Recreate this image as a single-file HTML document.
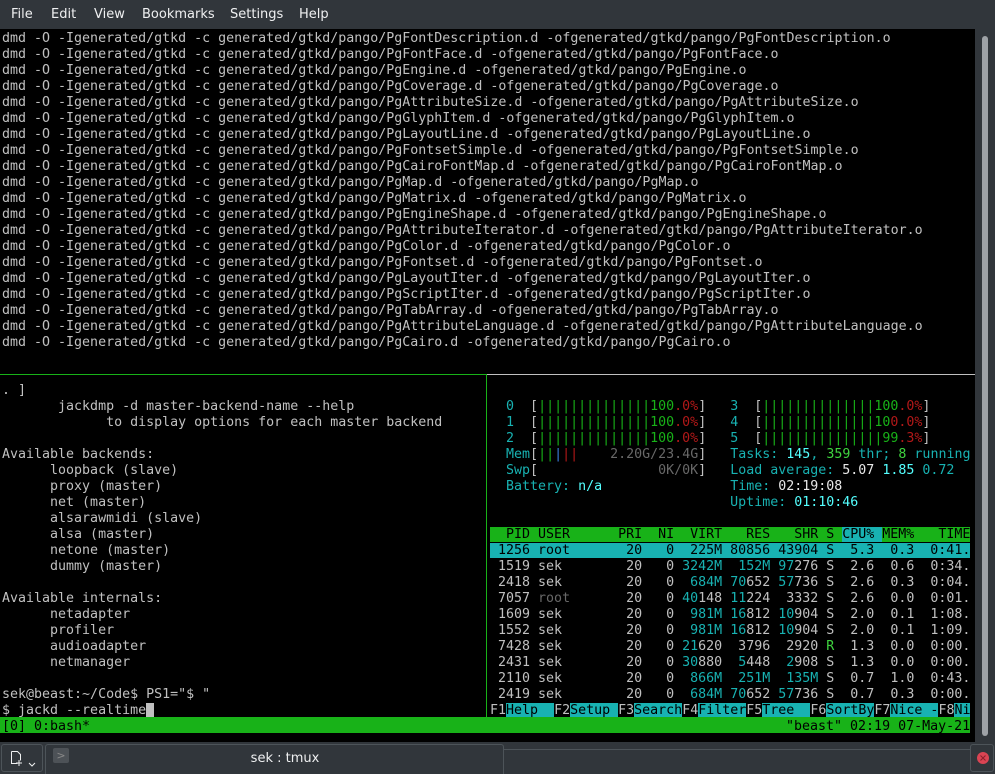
<!DOCTYPE html>
<html><head><meta charset="utf-8">
<style>
*{margin:0;padding:0;box-sizing:border-box}
body{width:995px;height:774px;background:#31363b;position:relative;overflow:hidden;font-family:"DejaVu Sans Mono","Liberation Mono",monospace}
.menu{position:absolute;top:0;left:0;width:995px;height:29px;background:#31363b;color:#eff0f1;font:13px "DejaVu Sans","Liberation Sans",sans-serif}
.menu span{position:absolute;top:7px}
.term{position:absolute;left:0;top:29px;width:975px;height:713px;background:#000}
pre{position:absolute;font-family:"DejaVu Sans Mono","Liberation Mono",monospace;font-size:13.3px;line-height:16px;color:#c0c0c0;white-space:pre}
.c{color:#18b2b2}.C{color:#54ffff}.g{color:#18b218}.G{color:#3fd43f}.r{color:#b21818}.d{color:#686868}.w{color:#e8e8e8}.b{color:#3b7ddd}
.hl{background:#18b2b2;color:#000}.hg{background:#18b218;color:#000}
.cur{background:#c0c0c0;color:#000}
.sb{position:absolute;left:975px;top:29px;width:20px;height:713px;background:#31363b}
.thumb{position:absolute;left:982px;top:36px;width:6px;height:700px;background:#9ea2a6;border-radius:3px}
.tabs{position:absolute;left:0;top:742px;width:995px;height:32px;background:#31363b}
</style></head><body>
<div class="menu"><span style="left:11px">File</span><span style="left:51px">Edit</span><span style="left:94px">View</span><span style="left:142px">Bookmarks</span><span style="left:230px">Settings</span><span style="left:299px">Help</span></div>
<div class="term"></div>
<pre style="left:2px;top:31px">dmd -O -Igenerated/gtkd -c generated/gtkd/pango/PgFontDescription.d -ofgenerated/gtkd/pango/PgFontDescription.o
dmd -O -Igenerated/gtkd -c generated/gtkd/pango/PgFontFace.d -ofgenerated/gtkd/pango/PgFontFace.o
dmd -O -Igenerated/gtkd -c generated/gtkd/pango/PgEngine.d -ofgenerated/gtkd/pango/PgEngine.o
dmd -O -Igenerated/gtkd -c generated/gtkd/pango/PgCoverage.d -ofgenerated/gtkd/pango/PgCoverage.o
dmd -O -Igenerated/gtkd -c generated/gtkd/pango/PgAttributeSize.d -ofgenerated/gtkd/pango/PgAttributeSize.o
dmd -O -Igenerated/gtkd -c generated/gtkd/pango/PgGlyphItem.d -ofgenerated/gtkd/pango/PgGlyphItem.o
dmd -O -Igenerated/gtkd -c generated/gtkd/pango/PgLayoutLine.d -ofgenerated/gtkd/pango/PgLayoutLine.o
dmd -O -Igenerated/gtkd -c generated/gtkd/pango/PgFontsetSimple.d -ofgenerated/gtkd/pango/PgFontsetSimple.o
dmd -O -Igenerated/gtkd -c generated/gtkd/pango/PgCairoFontMap.d -ofgenerated/gtkd/pango/PgCairoFontMap.o
dmd -O -Igenerated/gtkd -c generated/gtkd/pango/PgMap.d -ofgenerated/gtkd/pango/PgMap.o
dmd -O -Igenerated/gtkd -c generated/gtkd/pango/PgMatrix.d -ofgenerated/gtkd/pango/PgMatrix.o
dmd -O -Igenerated/gtkd -c generated/gtkd/pango/PgEngineShape.d -ofgenerated/gtkd/pango/PgEngineShape.o
dmd -O -Igenerated/gtkd -c generated/gtkd/pango/PgAttributeIterator.d -ofgenerated/gtkd/pango/PgAttributeIterator.o
dmd -O -Igenerated/gtkd -c generated/gtkd/pango/PgColor.d -ofgenerated/gtkd/pango/PgColor.o
dmd -O -Igenerated/gtkd -c generated/gtkd/pango/PgFontset.d -ofgenerated/gtkd/pango/PgFontset.o
dmd -O -Igenerated/gtkd -c generated/gtkd/pango/PgLayoutIter.d -ofgenerated/gtkd/pango/PgLayoutIter.o
dmd -O -Igenerated/gtkd -c generated/gtkd/pango/PgScriptIter.d -ofgenerated/gtkd/pango/PgScriptIter.o
dmd -O -Igenerated/gtkd -c generated/gtkd/pango/PgTabArray.d -ofgenerated/gtkd/pango/PgTabArray.o
dmd -O -Igenerated/gtkd -c generated/gtkd/pango/PgAttributeLanguage.d -ofgenerated/gtkd/pango/PgAttributeLanguage.o
dmd -O -Igenerated/gtkd -c generated/gtkd/pango/PgCairo.d -ofgenerated/gtkd/pango/PgCairo.o</pre>
<div style="position:absolute;left:0;top:374px;width:487px;height:1px;background:#18b218"></div>
<div style="position:absolute;left:487px;top:374px;width:488px;height:1px;background:#c0c0c0"></div>
<div style="position:absolute;left:486px;top:374px;width:1px;height:343px;background:#18b218"></div>
<pre style="left:2px;top:383px">. ]
       jackdmp -d master-backend-name --help
             to display options for each master backend

Available backends:
      loopback (slave)
      proxy (master)
      net (master)
      alsarawmidi (slave)
      alsa (master)
      netone (master)
      dummy (master)

Available internals:
      netadapter
      profiler
      audioadapter
      netmanager

sek@beast:~/Code$ PS1="$ "
$ jackd --realtime<span class="cur"> </span></pre>
<pre style="left:490px;top:383px">

  <span class="c">0</span>  [<span class="g">||||||||||||||100</span><span class="r">.0%</span>]   <span class="c">3</span>  [<span class="g">||||||||||||||100</span><span class="r">.0%</span>]
  <span class="c">1</span>  [<span class="g">||||||||||||||100</span><span class="r">.0%</span>]   <span class="c">4</span>  [<span class="g">||||||||||||||10</span><span class="r">0.0%</span>]
  <span class="c">2</span>  [<span class="g">||||||||||||||100</span><span class="r">.0%</span>]   <span class="c">5</span>  [<span class="g">|||||||||||||||99</span><span class="r">.3%</span>]
  <span class="c">Mem</span>[<span class="g">||</span><span class="b">|</span><span class="r">||</span>    <span class="d">2.20G/23.4G</span>]   <span class="c">Tasks: </span><span class="C">145</span><span class="c">, </span><span class="G">359</span><span class="c"> thr; </span><span class="G">8</span><span class="c"> running</span>
  <span class="c">Swp</span>[               <span class="d">0K/0K</span>]   <span class="c">Load average: </span><span class="w">5.07 </span><span class="C">1.85 </span><span class="c">0.72</span>
  <span class="c">Battery: </span><span class="C">n/a</span>                <span class="c">Time: </span><span class="w">02:19:08</span>
                              <span class="c">Uptime: </span><span class="C">01:10:46</span>

<span class="hg">  PID USER      PRI  NI  VIRT   RES   SHR S </span><span class="hl">CPU% </span><span class="hg">MEM%   TIME</span>
<span class="hl"> 1256 root       20   0  225M 80856 43904 S  5.3  0.3  0:41.</span>
 1519 sek        20   0 <span class="c">3242M</span>  <span class="c">152M</span> <span class="c">97</span>276 S  2.6  0.6  0:34.
 2418 sek        20   0  <span class="c">684M</span> <span class="c">70</span>652 <span class="c">57</span>736 S  2.6  0.3  0:04.
 7057 <span class="d">root</span>       20   0 <span class="c">40</span>148 <span class="c">11</span>224  3332 S  2.6  0.0  0:01.
 1609 sek        20   0  <span class="c">981M</span> <span class="c">16</span>812 <span class="c">10</span>904 S  2.0  0.1  1:08.
 1552 sek        20   0  <span class="c">981M</span> <span class="c">16</span>812 <span class="c">10</span>904 S  2.0  0.1  1:09.
 7428 sek        20   0 <span class="c">21</span>620  3796  2920 <span class="G">R</span>  1.3  0.0  0:00.
 2431 sek        20   0 <span class="c">30</span>880  <span class="c">5</span>448  <span class="c">2</span>908 S  1.3  0.0  0:00.
 2110 sek        20   0  <span class="c">866M</span>  <span class="c">251M</span>  <span class="c">135M</span> S  0.7  1.0  0:43.
 2419 sek        20   0  <span class="c">684M</span> <span class="c">70</span>652 <span class="c">57</span>736 S  0.7  0.3  0:00.
F1<span class="hl">Help  </span>F2<span class="hl">Setup </span>F3<span class="hl">Search</span>F4<span class="hl">Filter</span>F5<span class="hl">Tree  </span>F6<span class="hl">SortBy</span>F7<span class="hl">Nice -</span>F8<span class="hl">Ni</span></pre>
<div style="position:absolute;left:0;top:717px;width:970px;height:16px;background:#18b218"></div>
<pre style="left:2px;top:719px;color:#000">[0] 0:bash*</pre>
<pre style="left:786px;top:719px;color:#000">"beast" 02:19 07-May-21</pre>
<div class="sb"></div><div class="thumb"></div>
<div class="tabs">
  <div style="position:absolute;left:1px;top:2px;width:42px;height:28px;border:1px solid #4d5459;border-radius:3px"></div>
  <svg style="position:absolute;left:9px;top:8px" width="30" height="20" viewBox="0 0 30 20"><path d="M2.5 1.5h6l3 3v6M2.5 1.5v12h6" fill="none" stroke="#eff0f1" stroke-width="1"/><path d="M10 10v6M7 13h6" stroke="#eff0f1" stroke-width="1"/><path d="M20 13l3 3 3-3" fill="none" stroke="#eff0f1" stroke-width="1"/></svg>
  <div style="position:absolute;left:45px;top:2px;width:459px;height:30px;border:1px solid #4d5459;border-bottom:none;border-radius:3px 3px 0 0"></div>
  <div style="position:absolute;left:53px;top:6px;width:16px;height:15px;background:#4d5257;border-radius:2px;color:#888;font:11px 'DejaVu Sans',sans-serif;text-align:center;line-height:15px">&gt;</div>
  <div style="position:absolute;left:240px;top:9px;width:90px;text-align:center;color:#eff0f1;font:13px 'DejaVu Sans','Liberation Sans',sans-serif">sek : tmux</div>
  <div style="position:absolute;left:504px;top:7px;width:466px;height:1px;background:#4d5459"></div>
  <div style="position:absolute;left:970px;top:2px;width:24px;height:28px;border:1px solid #4d5459;border-radius:3px"></div>
  <svg style="position:absolute;left:976px;top:9px" width="14" height="14" viewBox="0 0 14 14"><circle cx="7" cy="7" r="6" fill="#da4453"/><path d="M4.5 4.5l5 5M9.5 4.5l-5 5" stroke="#8a1f2a" stroke-width="1"/></svg>
</div>
</body></html>
